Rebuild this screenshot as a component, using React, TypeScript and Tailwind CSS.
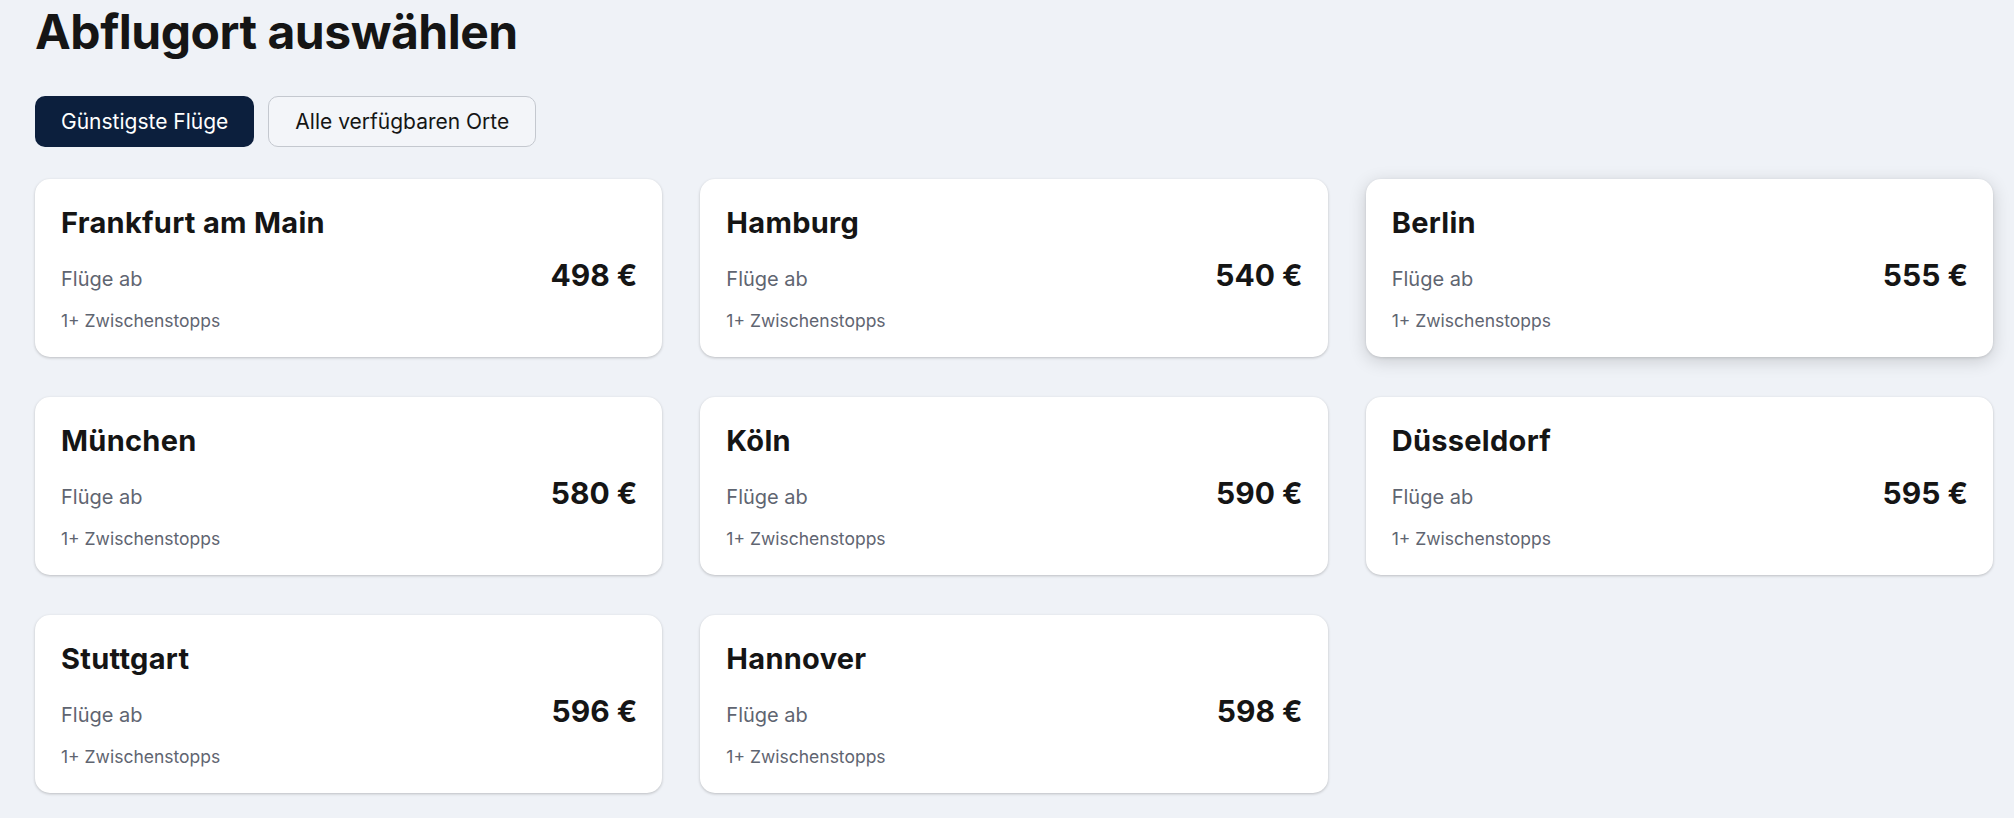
const origins = [
  { city: "Frankfurt am Main", price: 498 },
  { city: "Hamburg", price: 540 },
  { city: "Berlin", price: 555, hovered: true },
  { city: "München", price: 580 },
  { city: "Köln", price: 590 },
  { city: "Düsseldorf", price: 595 },
  { city: "Stuttgart", price: 596 },
  { city: "Hannover", price: 598 },
];

function OriginCard({
  city,
  price,
  hovered,
}: {
  city: string;
  price: number;
  hovered?: boolean;
}) {
  return (
    <div
      className={
        hovered
          ? "bg-white rounded-[15px] pt-[26px] pl-[26px] pr-[25px] pb-[24px] shadow-[0_4px_18px_rgba(0,0,0,0.16),0_1px_3px_rgba(0,0,0,0.12)]"
          : "bg-white rounded-[15px] pt-[26px] pl-[26px] pr-[25px] pb-[24px] shadow-[0_1px_3px_rgba(0,0,0,0.22)]"
      }
    >
      <h2 className="text-[29px] leading-[36px] font-bold text-[#151515] tracking-[0.01em]">
        {city}
      </h2>
      <div className="mt-[16px] flex items-baseline justify-between">
        <span className="text-[20px] text-[#5f6571]">Flüge ab</span>
        <span className="text-[30px] leading-[36px] font-bold text-[#151515]">
          {price} €
        </span>
      </div>
      <p className="mt-[15px] text-[17.5px] leading-[24px] text-[#5f6571]">
        1+ Zwischenstopps
      </p>
    </div>
  );
}

export default function App() {
  return (
    <div className="min-h-screen bg-[#eff2f7] pt-[8px] pl-[35px] pr-[21px] font-['Inter',sans-serif]">
      <h1 className="text-[48px] leading-[48px] font-bold text-[#151515] tracking-[-0.01em]">
        Abflugort auswählen
      </h1>

      <div className="mt-[40px] flex gap-[14px]">
        <button className="h-[51px] px-[26px] rounded-[10px] bg-[#0c1f3d] text-white text-[21px]">
          Günstigste Flüge
        </button>
        <button className="h-[51px] px-[26px] rounded-[10px] border border-[#c4c8cf] bg-[#f3f5f9] text-[#151515] text-[21px]">
          Alle verfügbaren Orte
        </button>
      </div>

      <div className="mt-[32px] grid grid-cols-3 gap-x-[38px] gap-y-[40px]">
        {origins.map((o) => (
          <OriginCard key={o.city} {...o} />
        ))}
      </div>
    </div>
  );
}
